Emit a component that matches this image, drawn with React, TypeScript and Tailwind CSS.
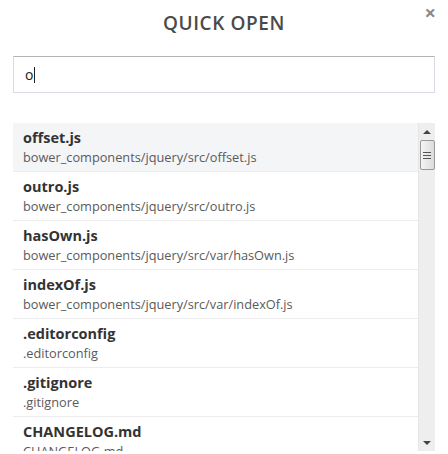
const files = [
  { name: "offset.js", path: "bower_components/jquery/src/offset.js" },
  { name: "outro.js", path: "bower_components/jquery/src/outro.js" },
  { name: "hasOwn.js", path: "bower_components/jquery/src/var/hasOwn.js" },
  { name: "indexOf.js", path: "bower_components/jquery/src/var/indexOf.js" },
  { name: ".editorconfig", path: ".editorconfig" },
  { name: ".gitignore", path: ".gitignore" },
  { name: "CHANGELOG.md", path: "CHANGELOG.md" },
];

function Scrollbar() {
  return (
    <div className="flex w-[17px] shrink-0 flex-col border-l border-[#e6e6e6] bg-[#eeeeee]">
      <div className="flex h-[17px] items-center justify-center">
        <div className="h-0 w-0 border-x-[4px] border-b-[4px] border-x-transparent border-b-[#444]" />
      </div>
      <div className="mx-auto flex h-[30px] w-[15px] flex-col items-center justify-center gap-[2px] rounded-[2px] border border-[#999] bg-gradient-to-r from-[#f4f4f4] to-[#dcdcdc]">
        <div className="h-px w-[8px] bg-[#555]" />
        <div className="h-px w-[8px] bg-[#555]" />
        <div className="h-px w-[8px] bg-[#555]" />
      </div>
      <div className="flex-1" />
      <div className="flex h-[17px] items-center justify-center">
        <div className="h-0 w-0 border-x-[4px] border-t-[4px] border-x-transparent border-t-[#444]" />
      </div>
    </div>
  );
}

export default function App() {
  return (
    <main className="relative h-[454px] w-[448px] overflow-hidden bg-white font-['Open_Sans',sans-serif] text-[#333]">
      <button className="absolute right-[12px] top-[3px] text-[20px] font-bold leading-none text-[#8a8a8a]">
        ×
      </button>

      <h2 className="pt-[9px] text-center text-[19px] font-semibold leading-[28px] tracking-[0.6px] text-[#4a4a4a]">
        QUICK OPEN
      </h2>

      <div className="mx-[13px] mt-[19px] flex h-[37px] items-center border border-[#d9dde3] border-t-[#b4b4b4] px-[11px]">
        <span className="text-[14px] text-[#222]">o</span>
        <span className="ml-px h-[16px] w-px bg-[#222]" />
      </div>

      <div className="mx-[13px] mt-[30px] flex h-[328px] overflow-hidden">
        <ul className="flex-1 overflow-hidden">
          {files.map((f, i) => (
            <li
              key={f.name}
              className={`h-[49px] border-b border-[#ececec] px-[10px] pt-[5px] ${i === 0 ? "bg-[#f4f5f7]" : ""}`}
            >
              <div className="text-[14.5px] font-bold leading-[20px] text-[#333]">{f.name}</div>
              <div className="text-[12.75px] leading-[18px] text-[#5a5a5a]">{f.path}</div>
            </li>
          ))}
        </ul>
        <Scrollbar />
      </div>
    </main>
  );
}
